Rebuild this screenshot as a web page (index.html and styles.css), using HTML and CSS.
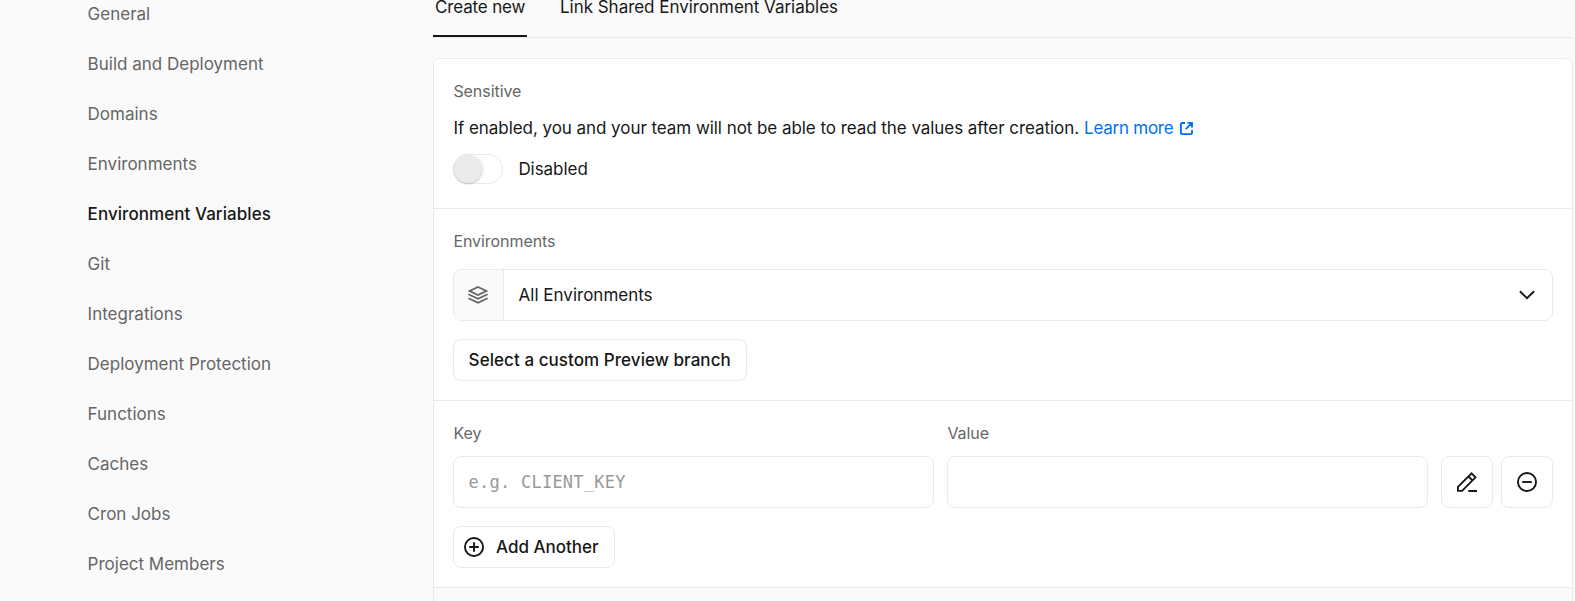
FILE: index.html
```html
<!DOCTYPE html>
<html lang="en">
<head>
<meta charset="utf-8">
<title>Environment Variables</title>
<link rel="stylesheet" href="styles.css">
</head>
<body>
<div class="page">
  <nav class="sidebar">
    <a>General</a>
    <a>Build and Deployment</a>
    <a>Domains</a>
    <a>Environments</a>
    <a class="active">Environment Variables</a>
    <a>Git</a>
    <a>Integrations</a>
    <a>Deployment Protection</a>
    <a>Functions</a>
    <a>Caches</a>
    <a>Cron Jobs</a>
    <a>Project Members</a>
  </nav>
  <main class="content">
    <div class="tabs">
      <div class="tab selected">Create new</div>
      <div class="tab">Link Shared Environment Variables</div>
    </div>
    <div class="card">
      <section class="sensitive">
        <div class="label">Sensitive</div>
        <p class="desc"><span class="desc-text">If enabled, you and your team will not be able to read the values after creation.</span><a class="link"><span>Learn more</span><svg width="15" height="15" viewBox="0 0 15 15" fill="none" stroke="currentColor" stroke-width="1.9"><path d="M6 2H3.2A1.3 1.3 0 0 0 1.9 3.3v8.5A1.3 1.3 0 0 0 3.2 13.1h8.5A1.3 1.3 0 0 0 13 11.8V9M8.5 1.9H13V6.4M13 1.9L6.8 8.1"/></svg></a></p>
        <div class="toggle-row"><span class="toggle"><span class="thumb"></span></span><span>Disabled</span></div>
      </section>
      <section class="environments">
        <div class="label">Environments</div>
        <div class="select">
          <span class="prefix"><svg width="20" height="20" viewBox="0 0 20 20" fill="none" stroke="currentColor" stroke-width="1.8"><path d="M10 2L18.3 6L10 10L1.7 6ZM.4 9.2L10 13.8L19.6 9.2M.4 13.2L10 17.8L19.6 13.2"/></svg></span>
          <span class="select-value">All Environments</span>
          <svg width="16" height="10" viewBox="0 0 16 10" fill="none" stroke="currentColor" stroke-width="1.9"><path d="M.9 1.2L8 8.2L15.1 1.2"/></svg>
        </div>
        <button class="button branch">Select a custom Preview branch</button>
      </section>
      <section class="variables">
        <div class="fields">
          <div class="field"><div class="label">Key</div><div class="input"><span class="placeholder">e.g. CLIENT_KEY</span></div></div>
          <div class="field"><div class="label">Value</div><div class="input"></div></div>
          <div class="actions">
            <button class="icon-button"><svg width="20" height="20" viewBox="0 0 20 20" fill="none" stroke="currentColor" stroke-width="1.9"><path d="M14.6 1.4L18.5 5.3L5.1 18.9H.95V14.9ZM11.5 4.5L15.4 8.4M11.3 19H20"/></svg></button>
            <button class="icon-button"><svg width="20" height="20" viewBox="0 0 20 20" fill="none" stroke="currentColor" stroke-width="1.9"><circle cx="10" cy="10" r="9.05"/><path d="M5.2 10H14.8"/></svg></button>
          </div>
        </div>
        <button class="button add"><svg width="20" height="20" viewBox="0 0 20 20" fill="none" stroke="currentColor" stroke-width="1.9"><circle cx="10" cy="10" r="9.05"/><path d="M5.2 10H14.8M10 5.2V14.8"/></svg><span>Add Another</span></button>
      </section>
    </div>
  </main>
</div>
</body>
</html>
```
FILE: styles.css
```css
* { box-sizing: border-box; }
body { margin: 0; background: #fafafa; color: #171717; font: 17px/24px Inter, "Liberation Sans", sans-serif; }
.page { display: flex; width: 1575px; height: 601px; overflow: hidden; }
.sidebar { width: 433px; flex: none; padding-left: 87.6px; margin-top: -11px; color: #666; }
.sidebar a { display: flex; align-items: center; height: 50px; white-space: nowrap; }
.sidebar .active { color: #171717; font-weight: 500; letter-spacing: .06px; }
.content { width: 1140px; flex: none; }
.tabs { display: flex; gap: 31px; height: 38px; border-bottom: 1px solid #eaeaea; white-space: nowrap; }
.tab { height: 37px; padding: 0 2px; line-height: 15px; letter-spacing: -.03px; }
.selected { width: 94px; border-bottom: 2px solid #171717; letter-spacing: -.15px; }
.card { margin-top: 20px; height: 560px; background: #fafafa; border: 1px solid #eaeaea; border-radius: 7px; overflow: hidden; }
section { padding: 0 19px; background: #fff; border-bottom: 1px solid #eaeaea; }
.label { padding-left: .4px; color: #666; font-size: 16px; line-height: 20px; letter-spacing: -.06px; }
.sensitive { height: 150px; padding-top: 22px; }
.desc { display: flex; align-items: center; gap: 5px; margin: 15px 0 0 .5px; line-height: 24px; white-space: nowrap; }
.desc-text { letter-spacing: -.055px; }
.link { display: flex; align-items: center; gap: 5.5px; color: #0070f3; letter-spacing: -.25px; }
.toggle-row { display: flex; align-items: center; gap: 15px; margin-top: 14px; padding-left: .4px; letter-spacing: -.05px; }
.toggle { width: 50px; height: 30px; border: 1px solid #eaeaea; border-radius: 15px; }
.thumb { display: block; width: 28px; height: 28px; border-radius: 50%; background: #ebebeb; box-shadow: 0 1px 2px rgba(0, 0, 0, .2), 1px 0 4px rgba(0, 0, 0, .06); }
.environments { height: 192px; padding-top: 22px; }
.select { display: flex; align-items: center; height: 52px; margin-top: 18px; padding-right: 17px; border: 1px solid #eaeaea; border-radius: 8px; overflow: hidden; }
.prefix { display: flex; align-items: center; justify-content: center; width: 50px; height: 50px; padding-right: 1px; color: #666; background: #fafafa; border-right: 1px solid #eaeaea; }
.select-value { flex: 1; padding-left: 14.6px; }
.button { display: flex; align-items: center; height: 42px; padding: 0 14.6px; margin-top: 18px; background: #fff; border: 1px solid #eaeaea; border-radius: 8px; color: #171717; font: 500 17px/24px Inter, "Liberation Sans", sans-serif; white-space: nowrap; }
.branch { width: 294px; letter-spacing: .06px; }
.variables { height: 187px; padding-top: 22px; }
.fields { display: flex; align-items: flex-end; gap: 13px; }
.field { width: 481px; }
.input { display: flex; align-items: center; height: 52px; margin-top: 13px; padding-left: 14.6px; border: 1px solid #eaeaea; border-radius: 8px; }
.placeholder { color: #999; font: 17px/24px "DejaVu Sans Mono", monospace; letter-spacing: .24px; }
.actions { display: flex; gap: 8px; }
.icon-button { display: flex; align-items: center; justify-content: center; width: 52px; height: 52px; padding: 0; background: #fff; border: 1px solid #eaeaea; border-radius: 8px; color: #171717; }
.add { width: 162px; padding: 0 10px; gap: 12px; }
```
